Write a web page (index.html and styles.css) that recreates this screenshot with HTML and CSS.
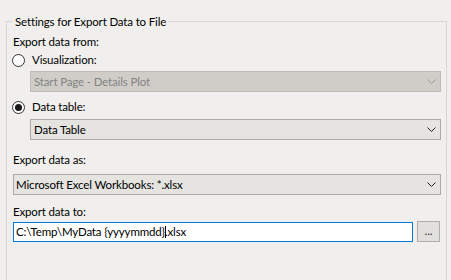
FILE: index.html
```html
<!DOCTYPE html>
<html>
<head>
<meta charset="utf-8">
<link rel="stylesheet" href="styles.css">
</head>
<body>
<fieldset class="group">
  <legend class="group-title">Settings for Export Data to File</legend>
  <div class="label label-from">Export data from:</div>
  <div class="radio-row row-vis">
    <span class="radio"></span>
    <span class="radio-text">Visualization:</span>
  </div>
  <div class="combo combo-indent combo-disabled">
    <span class="combo-text">Start Page - Details Plot</span>
    <svg class="chevron" width="9" height="5" viewBox="0 0 9 5"><polyline points="0.5,0.5 4.5,4.5 8.5,0.5" fill="none" stroke="currentColor" stroke-width="1"/></svg>
  </div>
  <div class="radio-row row-table">
    <span class="radio radio-checked"><span class="radio-dot"></span></span>
    <span class="radio-text">Data table:</span>
  </div>
  <div class="combo combo-indent combo-table">
    <span class="combo-text">Data Table</span>
    <svg class="chevron" width="9" height="5" viewBox="0 0 9 5"><polyline points="0.5,0.5 4.5,4.5 8.5,0.5" fill="none" stroke="currentColor" stroke-width="1"/></svg>
  </div>
  <div class="label label-as">Export data as:</div>
  <div class="combo combo-format">
    <span class="combo-text">Microsoft Excel Workbooks: *.xlsx</span>
    <svg class="chevron" width="9" height="5" viewBox="0 0 9 5"><polyline points="0.5,0.5 4.5,4.5 8.5,0.5" fill="none" stroke="currentColor" stroke-width="1"/></svg>
  </div>
  <div class="label label-to">Export data to:</div>
  <div class="path-row">
    <div class="textbox">C:\Temp\MyData {yyyymmdd}<span class="caret"></span>.xlsx</div>
    <div class="browse">...</div>
  </div>
</fieldset>
</body>
</html>
```

FILE: styles.css
```css
html, body {
  margin: 0;
  padding: 0;
  overflow: hidden;
}
body {
  width: 451px;
  height: 280px;
  background: #f0efed;
  font-family: Lato, "Liberation Sans", sans-serif;
  font-size: 11.5px;
  letter-spacing: -0.15px;
  color: #000;
}
.group {
  margin: 14px 4px 0 6px;
  padding: 0 5px 0 6px;
  border: 1px solid #d8d6d2;
  border-bottom: 0;
  height: 266px;
  box-sizing: border-box;
  display: flex;
  flex-direction: column;
  min-width: 0;
}
.group-title {
  padding: 0 2px;
  line-height: 15px;
  height: 15px;
}
.label {
  line-height: 15px;
  height: 15px;
}
.label-from { margin-top: 5px; }
.label-as { margin-top: 12px; }
.label-to { margin-top: 9px; }
.radio-row {
  display: flex;
  align-items: center;
  height: 16px;
  line-height: 16px;
}
.row-vis { margin-top: 3px; }
.row-table { margin-top: 7px; }
.radio {
  box-sizing: border-box;
  width: 13px;
  height: 13px;
  margin-left: -1px;
  border: 1px solid #333;
  border-radius: 50%;
  background: #fff;
  display: flex;
  align-items: center;
  justify-content: center;
}
.radio-dot {
  width: 7px;
  height: 7px;
  border-radius: 50%;
  background: #1a1a1a;
}
.radio-text {
  margin-left: 7px;
}
.combo {
  box-sizing: border-box;
  height: 21px;
  border: 1px solid #adaba6;
  background: #e5e4e1;
  display: flex;
  align-items: center;
  padding: 0 4px 0 3px;
  line-height: 19px;
  color: #000;
}
.combo-text { flex: 1; }
.combo-indent { margin-left: 17px; }
.combo-disabled {
  margin-top: 3px;
  background: #d0cdc8;
  border-color: #bdbbb6;
  color: #838383;
}
.combo-disabled .chevron { color: #9a9894; }
.combo-table { margin-top: 4px; }
.combo-format { margin-top: 7px; padding-left: 2px; }
.chevron {
  color: #222;
  display: block;
}
.path-row {
  margin-top: 2px;
  display: flex;
  align-items: flex-start;
  gap: 4px;
  padding-right: 1px;
}
.textbox {
  flex: 1;
  box-sizing: border-box;
  height: 20px;
  margin-top: 1px;
  border: 1px solid #0078d7;
  background: #fff;
  padding-left: 2px;
  line-height: 18px;
  white-space: nowrap;
}
.caret {
  display: inline-block;
  width: 1px;
  height: 12px;
  background: #000;
  margin-right: -1px;
  vertical-align: -2px;
}
.browse {
  box-sizing: border-box;
  width: 23px;
  height: 21px;
  border: 1px solid #adadad;
  background: #e1e0dd;
  text-align: center;
  line-height: 17px;
  color: #3a2a40;
  letter-spacing: 0;
}
```
